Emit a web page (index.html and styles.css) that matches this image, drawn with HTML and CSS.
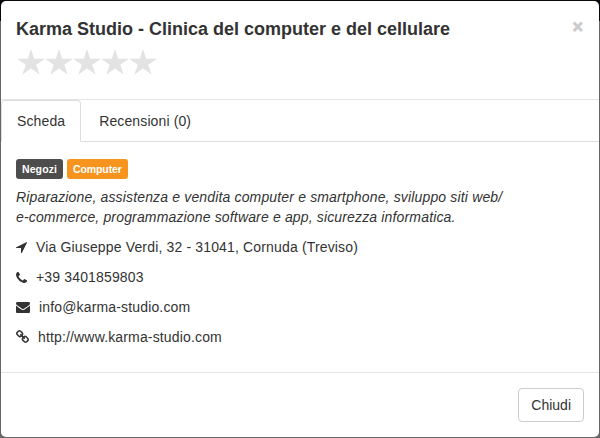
FILE: index.html
```html
<!DOCTYPE html>
<html lang="it">
<head>
<meta charset="utf-8">
<title>Karma Studio</title>
<link rel="stylesheet" href="styles.css">
</head>
<body>
<svg width="0" height="0" class="defs"><symbol id="star" viewBox="0 0 28 26"><path d="M14 0l3.200 9.700H28l-8.700 6 3.300 9.900L14 19.600l-8.600 6 3.300-9.900-8.700-6h10.800z"/></symbol></svg>
<div class="modal">
  <header class="header">
    <div>
      <h4 class="title">Karma Studio - Clinica del computer e del cellulare</h4>
      <div class="stars"><svg><use href="#star"/></svg><svg><use href="#star"/></svg><svg><use href="#star"/></svg><svg><use href="#star"/></svg><svg><use href="#star"/></svg></div>
    </div>
    <button class="close" aria-label="Chiudi">×</button>
  </header>
  <nav class="tabs"><a class="tab active">Scheda</a><a class="tab">Recensioni (0)</a></nav>
  <main class="body">
    <div class="labels"><span class="label dark">Negozi</span><span class="label orange">Computer</span></div>
    <p class="desc">Riparazione, assistenza e vendita computer e smartphone, sviluppo siti web/<br>e-commerce, programmazione software e app, sicurezza informatica.</p>
    <p class="row"><svg class="i11" viewBox="0 0 1408 1408"><path d="M1401 103 761 1383q-17 35-57 35-5 0-15-2-22-5-35.500-22.500T640 1354V778H64q-22 0-39.500-13.500T2 729t4-42 29-30L1315 17q13-7 29-7 27 0 45 19 15 14 18.500 34.500T1401 103z"/></svg>Via Giuseppe Verdi, 32 - 31041, Cornuda (Treviso)</p>
    <p class="row"><svg class="i11" viewBox="0 0 1408 1408"><path d="M1408 1112q0 27-10 70.500t-21 68.500q-21 50-122 106-94 51-186 51-27 0-53-3.500t-57.500-12.500-47-14.500T856 1357t-49-18q-98-35-175-83-127-79-264-216T152 776q-48-77-83-175-3-9-18-49t-20.500-55.500-14.500-47T3.500 392 0 339q0-92 51-186Q107 52 157 31q25-11 68.500-21T296 0q14 0 21 3 18 6 53 76 11 19 30 54t35 63.500 31 53.500q3 4 17.500 25t21.500 35.500 7 28.500q0 20-28.500 50t-62 55-62 53-28.500 46q0 9 5 22.500t8.500 20.500 14 24 11.500 19q76 137 174 235t235 174q2 1 19 11.500t24 14 20.500 8.500 22.500 5q18 0 46-28.500t53-62 55-62 50-28.500q14 0 28.500 7t35.500 21.500 25 17.500q25 15 53.500 31t63.500 35 54 30q70 35 76 53 3 7 3 21z"/></svg>+39 3401859803</p>
    <p class="row"><svg class="i14" viewBox="0 0 1792 1408"><path d="M1792 454v794q0 66-47 113t-113 47H160q-66 0-113-47T0 1248V454q44 49 101 87 362 246 497 345 57 42 92.500 65.500t94.500 48 110 24.500h2q51 0 110-24.500t94.500-48T1194 886q170-123 498-345 57-39 100-87zm0-294q0 79-49 151t-122 123q-376 261-468 325-10 7-42.500 30.500t-54 38-52 32.500-57.500 27-50 9h-2q-23 0-50-9t-57.500-27-52-32.500-54-38T639 759q-91-64-262-182.500T172 434q-62-42-117-115.500T0 182q0-78 41.500-130T160 0h1472q65 0 112.500 47t47.500 113z"/></svg>info@karma-studio.com</p>
    <p class="row"><svg class="i13" viewBox="16 16 1632 1632"><path d="M1456 1216q0-40-28-68l-208-208q-28-28-68-28-42 0-72 32 3 3 19 18.500t21.500 21.500 15 19 13 25.500 3.500 27.500q0 40-28 68t-68 28q-15 0-27.500-3.500t-25.500-13-19-15-21.500-21.500-18.500-19q-33 31-33 73 0 40 28 68l206 207q27 27 68 27 40 0 68-26l147-146q28-28 28-67zM753 511q0-40-28-68L519 236q-28-28-68-28-39 0-68 27L236 381q-28 28-28 67 0 40 28 68l208 208q27 27 68 27 42 0 72-31-3-3-19-18.500T543.500 680t-15-19-13-25.500T512 608q0-40 28-68t68-28q15 0 27.500 3.500t25.500 13 19 15 21.500 21.500 18.500 19q33-31 33-74zm895 705q0 120-85 203l-147 146q-83 83-203 83-121 0-204-85l-206-207q-83-83-83-203 0-123 88-209l-88-88q-86 88-208 88-120 0-204-84L100 652Q16 568 16 448t85-203L248 99q83-83 203-83 121 0 204 85l206 207q83 83 83 203 0 123-88 209l88 88q86-88 208-88 120 0 204 84l208 208q84 84 84 204z"/></svg>http://www.karma-studio.com</p>
  </main>
  <footer class="footer"><button class="btn">Chiudi</button></footer>
</div>
</body>
</html>
```
FILE: styles.css
```css
* { box-sizing: border-box; }
body { margin: 0; background: linear-gradient(#08080c 21px, #666 21px); font: 14px/20px "Liberation Sans", Arial, sans-serif; color: #333; }
.defs { position: absolute; }
.modal { width: 600px; height: 438px; background: #fff; background-clip: padding-box; border: 1px solid transparent; border-radius: 6px; display: flex; flex-direction: column; overflow: hidden; }
.header { height: 99px; padding: 15px; display: flex; justify-content: space-between; align-items: flex-start; border-bottom: 1px solid #e5e5e5; }
.title { margin: 0; font-size: 18px; line-height: 26px; font-weight: 700; }
.stars { display: flex; margin: 7px 0 0 1px; }
.stars svg { width: 28px; height: 26px; fill: #e3e3e3; }
.close { border: 0; padding: 1px 1px 0 0; background: none; color: #ccc; font: 700 18px/20px "Liberation Sans", Arial, sans-serif; -webkit-text-stroke: 0.8px #ccc; }
.tabs { height: 42px; display: flex; border-bottom: 1px solid #ddd; }
.tab { padding: 10px 15px; height: 42px; border: 1px solid transparent; margin-right: 2px; letter-spacing: 0.12px; }
.tab.active { background: #fff; border-color: #ddd #ddd #fff; border-radius: 4px 4px 0 0; }
.body { padding: 17px 15px 0; height: 230px; letter-spacing: 0.155px; }
.labels { display: flex; gap: 4px; height: 20px; }
.label { height: 20px; padding: 0 6px; border-radius: 3px; color: #fff; font: 700 10.5px/20px "Liberation Sans", Arial, sans-serif; letter-spacing: 0; }
.dark { width: 47px; letter-spacing: 0.1px; background: #4d4d4d; }
.orange { width: 61px; padding-right: 0; letter-spacing: -0.1px; background: #f7941e; }
.desc { margin: 8px 0 10px; font-style: italic; }
.row { margin: 0 0 10px; height: 20px; display: flex; align-items: center; }
.row svg { fill: #333; margin-right: 9px; }
.i11 { width: 11px; height: 11px; }
.i14 { width: 14px; height: 11px; }
.row .i13 { width: 13px; height: 13px; margin-bottom: 1px; }
.footer { border-top: 1px solid #e5e5e5; padding: 15px; display: flex; justify-content: flex-end; }
.btn { height: 34px; padding: 6px 12px; border: 1px solid #ccc; border-radius: 4px; background: #fff; color: #333; font: 14px/20px "Liberation Sans", Arial, sans-serif; }
```
